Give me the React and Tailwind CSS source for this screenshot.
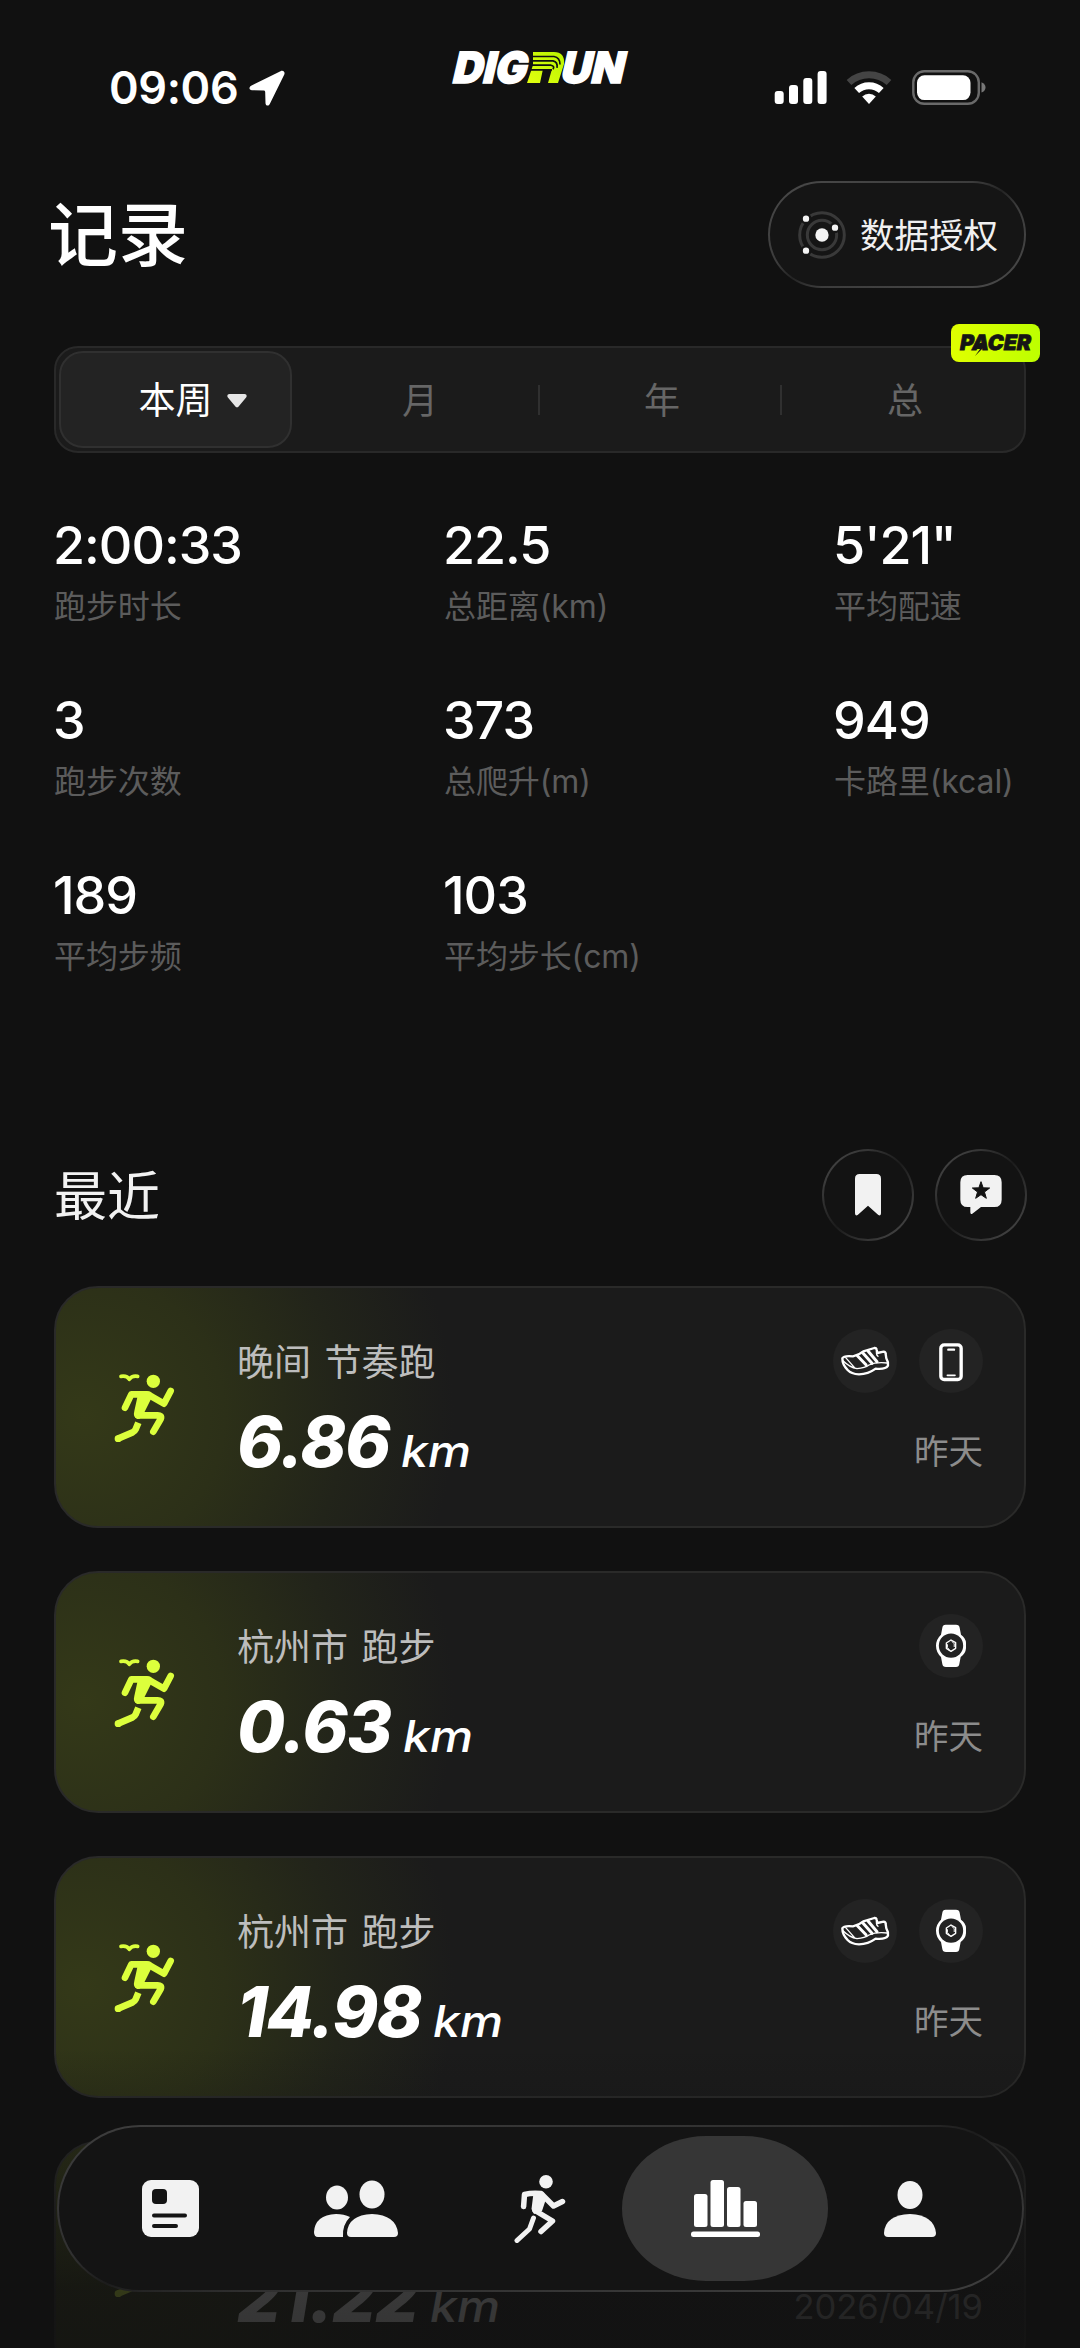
import React from "react";

const stats = [
  ["2:00:33", "跑步时长"],
  ["22.5", "总距离(km)"],
  ["5'21\"", "平均配速"],
  ["3", "跑步次数"],
  ["373", "总爬升(m)"],
  ["949", "卡路里(kcal)"],
  ["189", "平均步频"],
  ["103", "平均步长(cm)"],
];

const runs = [
  { title: "晚间 节奏跑", km: "6.86", date: "昨天", gear: ["shoe", "phone"] },
  { title: "杭州市 跑步", km: "0.63", date: "昨天", gear: ["watch"] },
  { title: "杭州市 跑步", km: "14.98", date: "昨天", gear: ["shoe", "watch"] },
  { title: "", km: "21.22", date: "2026/04/19", gear: [] },
];

function StatusBar() {
  return (
    <div className="flex h-[136px] shrink-0 items-start pl-[109px] pr-[94px]">
      <div className="mt-[61px] flex w-[331px] items-center gap-[11px]">
        <span className="text-[45px] leading-[54px] font-semibold tracking-[-0.4px]">09:06</span>
        <svg width="36" height="36" viewBox="0 0 36 36" fill="#fff">
          <path d="M31.5 1.2 2.6 15.5C-.4 17-.2 20 3 20.2l11.600.4c1 0 1.600.6 1.600 1.600l.3 11c.2 3 3.300 3.200 4.400.5L35.300 4.500c1-2.500-1-4.500-3.800-3.300Z" />
        </svg>
      </div>
      <svg className="mt-[37px] overflow-visible" width="202" height="62" viewBox="-12 -12 202 62">
        <defs>
          <linearGradient id="lime" x1="0" x2="1" y1="1" y2="0">
            <stop offset="0" stopColor="#e2ff10" />
            <stop offset="1" stopColor="#b8f500" />
          </linearGradient>
        </defs>
        <g fill="#fff" fontFamily="Inter" fontWeight="900" fontSize="43" transform="translate(0 34) skewX(-13)">
          <text x="-1" y="0" textLength="74" lengthAdjust="spacingAndGlyphs" stroke="#fff" strokeWidth="1.500">DIG</text>
          <text x="107" y="0" textLength="63" lengthAdjust="spacingAndGlyphs" stroke="#fff" strokeWidth="1.500">UN</text>
        </g>
        <path d="M81 3h21q11 0 10 12l-6 19h-10l4-14h-9l-3 14H75l6-18Z" fill="url(#lime)" />
        <g fill="none" stroke="#111" strokeWidth="1.700">
          <path d="M80 7.500h22q6 1 6 8M79 11.800h22q5 1 4 7M78 16.200h21q4 1 2 4M76 20.800h24" />
        </g>
      </svg>
      <div className="mt-[69px] ml-auto flex items-start">
        <svg width="215" height="37" viewBox="0 0 215 37">
          <g fill="#fff">
            <rect x="3.700" y="22" width="9" height="13" rx="3" />
            <rect x="18" y="16" width="9" height="19" rx="3" />
            <rect x="32.300" y="9" width="9" height="26" rx="3" />
            <rect x="46.600" y="2" width="9" height="33" rx="3" />
          </g>
          <g fill="none" strokeWidth="7">
            <path d="M78 13.500a30 30 0 0 1 40 0" stroke="#444" />
            <path d="M85.700 21.500a18.500 18.500 0 0 1 24.600 0" stroke="#fff" />
          </g>
          <path d="M98 35l-6.800-7.500a10 10 0 0 1 13.600 0Z" fill="#fff" />
          <rect x="142.300" y="2.300" width="65.500" height="32.500" rx="11" fill="none" stroke="#6a6a6a" strokeWidth="2.400" />
          <rect x="146" y="6.300" width="53.500" height="24.800" rx="7.500" fill="#fff" />
          <path d="M210.500 13.200q4 1.800 4 5.200t-4 5.200Z" fill="#777" />
        </svg>
      </div>
    </div>
  );
}

function Header() {
  return (
    <header className="mt-[45px] flex h-[107px] items-center justify-between">
      <h1 className="mt-[2px] -ml-[6px] text-[70px] leading-[84px] font-medium">记录</h1>
      <div className="h-[107px] w-[258px] rounded-[54px] bg-[linear-gradient(to_bottom_right,#4a4a4a,#3c3c3c_40%,#242424_50%,#3c3c3c_60%,#4a4a4a)] p-[2px]">
        <div className="flex h-full items-center rounded-[52px] bg-[#151515] pl-[27px]">
          <svg width="50" height="50" viewBox="0 0 150 150">
            <g fill="none" stroke="#393939" strokeWidth="9">
              <circle cx="75" cy="75" r="67" />
              <circle cx="75" cy="75" r="44" />
            </g>
            <g fill="#f3f3f3" stroke="#151515" strokeWidth="7">
              <circle cx="27" cy="26" r="13" />
              <circle cx="27" cy="122" r="13" />
              <circle cx="114" cy="53" r="13" />
            </g>
            <circle cx="75" cy="75" r="20" fill="#f3f3f3" />
          </svg>
          <span className="mt-[2px] ml-[13px] text-[34.500px] leading-[50px] font-normal text-[#f0f0f0]">数据授权</span>
        </div>
      </div>
    </header>
  );
}

function Tabs() {
  return (
    <div className="relative mt-[58px] grid h-[107px] grid-cols-4 rounded-[24px] border-2 border-[#292929] bg-[#1b1b1b] text-[36px] font-normal text-[#666]">
      <div className="my-[3px] mr-[6px] ml-[3px] flex items-center justify-center rounded-[24px] border-2 border-[#303030] bg-[#232323] text-white">
        <span className="relative mt-[3px] text-[37px]">
          本周
          <svg className="absolute top-[21px] left-[88px]" width="20" height="14" viewBox="0 0 20 14">
            <path d="M2.500 0h15c2 0 2.800 2 1.600 3.400l-7.500 9c-1 1.200-2.200 1.200-3.200 0L.9 3.400C-.3 2 .5 0 2.500 0Z" fill="#e6e6e6" />
          </svg>
        </span>
      </div>
      {["月", "年", "总"].map((t, i) => (
        <div key={t} className="flex items-center">
          <span className="mt-[2px] flex-1 pl-[4px] text-center">{t}</span>
          {i < 2 && <i className="h-[30px] w-[2px] bg-[#303030]" />}
        </div>
      ))}
      <div className="absolute -top-[24px] -right-[16px] flex h-[38px] w-[89px] items-center justify-center rounded-[8px] bg-linear-to-r from-[#e0ff00] to-[#bdff00]">
        <svg className="overflow-visible" width="86" height="38" viewBox="-5 -6 86 38">
          <text transform="translate(0 20) skewX(-10)" x="1" y="0" textLength="71" lengthAdjust="spacingAndGlyphs" fontFamily="Inter" fontWeight="900" fontSize="21" fill="#151515" stroke="#151515" strokeWidth=".8">PACER</text>
          <path d="M22 13l-4 6h4l-5 7 9-9h-4l3-4Z" fill="#151515" />
        </svg>
      </div>
    </div>
  );
}

function Stats() {
  return (
    <div className="mt-[60px] grid h-[525px] w-[1170px] grid-cols-[390px_390px_390px] grid-rows-[175px_175px_175px]">
      {stats.map(([v, l]) => (
        <div key={l}>
          <div className="-ml-[1px] h-[66px] text-[52px] leading-[66px] font-[450] tracking-[-1px]">{v}</div>
          <div className="mt-[4px] text-[32px] leading-[48px] font-normal tracking-[-0.1px] text-[#5c5c5c]">{l}</div>
        </div>
      ))}
    </div>
  );
}

function RoundButton({ children }) {
  return (
    <div className="size-[92px] rounded-full bg-[linear-gradient(135deg,#444_10%,#1c1c1c_50%,#444_90%)] p-[2px]">
      <div className="flex size-full items-center justify-center rounded-full bg-[#131313]">{children}</div>
    </div>
  );
}

function RecentHeader() {
  return (
    <div className="mt-[111px] flex h-[92px] items-center justify-between">
      <h2 className="mt-[4px] text-[53px] leading-[72px] font-normal text-[#f2f2f2]">最近</h2>
      <div className="-mr-[1px] flex gap-[21px]">
        <RoundButton>
          <svg width="26" height="42" viewBox="0 0 78 126" fill="#f2f2f2">
            <path d="M14 0h50q14 0 14 14v104q0 9-8 5L39 95 8 123q-8 4-8-5V14Q0 0 14 0Z" />
          </svg>
        </RoundButton>
        <RoundButton>
          <svg width="42" height="40" viewBox="0 0 124 120">
            <path d="M22 0h80q22 0 22 22v52q0 22-22 22H62l-26 20q-6 3-6-4V96h-8Q0 96 0 74V22Q0 0 22 0Z" fill="#f2f2f2" />
            <path d="m62 20 6.500 18.500 19.500.5-15.600 12L78 70 62 59 46 70l5.600-19L36 39l19.500-.5Z" fill="#131313" stroke="#131313" strokeWidth="3" strokeLinejoin="round" />
          </svg>
        </RoundButton>
      </div>
    </div>
  );
}

function Gear({ kind }) {
  return (
    <svg width="64" height="64" viewBox="0 0 192 192" fill="none" stroke="#fff" strokeLinecap="round" strokeLinejoin="round">
      <circle cx="96" cy="96" r="96" fill="#232323" stroke="none" />
      {kind === "shoe" && (
        <>
          <path strokeWidth="7" d="M28 88Q32 79 60 82Q78 78 91 67L124 57Q130 56 131 62L133 72L152 68Q158 68 158 75L160 88Q167 100 165 110Q158 122 128 119Q105 136 78 136Q55 135 43 122Q28 107 28 88Z" />
          <path strokeWidth="4" d="M30 95Q50 115 72 119Q96 117 108 108Q130 98 163 102M38 86L64 115M131 64Q128 76 135 82" />
          <path strokeWidth="9" d="M73 80L99 107M89 71L117 103M105 66L132 98" />
        </>
      )}
      {kind === "phone" && (
        <>
          <rect x="65.500" y="47.500" width="61" height="104" rx="10" strokeWidth="10" />
          <path d="M88 62h17" strokeWidth="7" />
          <path d="M85 139h23" strokeWidth="5" />
        </>
      )}
      {kind === "watch" && (
        <>
          <path fill="#fff" stroke="none" d="M80 32h31q10 0 11 9l4 21q14 10 15 24v17q-1 16-16 26l-4 21q-1 9-10 9H81q-10 0-11-9l-4-21Q51 114 51 95t15-33l4-21q1-9 10-9Z" />
          <circle cx="96" cy="95" r="36.500" fill="#232323" stroke="none" />
          <path strokeWidth="4" d="M96 78l14 8v17l-14 9-14-9V87ZM96 78l8 5M82 103l8 6" />
          <path strokeWidth="3" d="M100 83q9 5 6 15M90 107q-8-6-5-15" />
        </>
      )}
    </svg>
  );
}

function TrailRunner() {
  return (
    <svg width="90" height="100" viewBox="0 0 270 300" fill="none" stroke="#dcff3c" strokeLinecap="round" strokeLinejoin="round" strokeWidth="20">
      <circle cx="160" cy="64" r="20" fill="#dcff3c" stroke="none" />
      <path strokeWidth="11" d="M63 49q18-3 25 9 8-12 25-9" />
      <path d="M75 143 94 103h46q8 0 14 6l38 22 20-38" />
      <path fill="#dcff3c" stroke="none" d="M116 94h28q14 2 12 17l-22 44q-8 22-22 22-14-6-9-24Z" />
      <path d="M114 166h57q16-1 11 11l-22 38" />
      <path d="M54 236 98 217q6-3 9-9l8-20" strokeLinecap="butt" />
      <path d="M54 236h1" />
    </svg>
  );
}

function RunCard({ title, km, date, gear }) {
  return (
    <div className="flex h-[242px] shrink-0 rounded-[44px] border-2 border-[#2a2a29] bg-[#1b1b1b] bg-[radial-gradient(circle_370px_at_30px_130px,#343918,#2c3018_38%,#22241a_70%,#1b1b1b)] bg-origin-border pr-[41px]">
      <div className="mt-[72px] ml-[44px] w-[137px] shrink-0">
        <TrailRunner />
      </div>
      <div className="mt-[50px] flex-1">
        <div className="h-[50px] text-[37px] leading-[50px] font-normal text-[#bdbdbd] [word-spacing:3px]">{title}</div>
        <div className="mt-[10px] flex h-[88px] items-baseline gap-[12px] italic leading-[88px]">
          <span className="text-[69.500px] font-extrabold tracking-[-1.500px]">{km}</span>
          <span className="inline-block origin-left scale-x-[1.1] text-[44px] font-medium">km</span>
        </div>
      </div>
      <div className="mt-[41px] flex flex-col items-end">
        <div className="flex h-[64px] gap-[22px]">
          {gear.map((g) => (
            <Gear key={g} kind={g} />
          ))}
        </div>
        <div className="mt-[34px] text-[34.500px] leading-[50px] font-normal text-[#8c8c8c]">{date}</div>
      </div>
    </div>
  );
}

function TabBar() {
  return (
    <nav className="absolute top-[2125px] left-[57px] h-[167px] w-[967px] rounded-[84px] bg-[linear-gradient(to_bottom_right,#3e3e3e,#303030_40%,#1c1c1c_50%,#303030_60%,#3e3e3e)] p-[2px]">
      <div className="grid h-full grid-cols-5 items-center justify-items-center rounded-[82px] bg-[#141414] pr-[20px] pl-[20px] text-[#f2f2f2]">
        <svg className="-ml-[1px]" width="57" height="57" viewBox="0 0 57 57">
          <rect width="57" height="57" rx="9" fill="currentColor" />
          <rect x="10" y="9" width="15" height="15" rx="4" fill="#141414" />
          <path d="M12 35.500h31M12 46h22" stroke="#141414" strokeWidth="4" strokeLinecap="round" />
        </svg>
        <svg width="84" height="57" viewBox="0 0 84 57" fill="currentColor">
          <ellipse cx="23" cy="17.500" rx="11" ry="12" />
          <ellipse cx="58" cy="14.500" rx="12.500" ry="14" />
          <path d="M4 57q-4 0-4-5 1-17 22-18 8 0 14 3-8 8-7 20ZM37 57q-4 0-4-4 1-18 25-19 24 1 26 19 0 4-4 4Z" />
        </svg>
        <svg width="52" height="68" viewBox="0 0 52 68" fill="none" stroke="currentColor" strokeWidth="5.500" strokeLinecap="round" strokeLinejoin="round">
          <circle cx="32" cy="6.800" r="6.800" fill="currentColor" stroke="none" />
          <path d="M9.600 31.500 10.500 19.500Q18 17.500 27 18.500L39.500 31 48.500 26.500" />
          <path d="M19.500 18 30 17.500 32 24 28 36 20 39 17.500 34Z" fill="currentColor" stroke="none" />
          <path d="M21 35.500 38.500 46 27 56.500" />
          <path d="M19.500 43 15.500 54 3 65.500" strokeWidth="5" />
        </svg>
        <div className="-mx-[12px] flex h-[145px] w-[206px] items-center justify-center rounded-[84px/72px] bg-[#363636] text-white">
          <svg width="69" height="57" viewBox="0 0 69 57" fill="currentColor">
            <rect x="3" y="14" width="13.500" height="33" rx="2.500" />
            <rect x="19.500" y="0" width="13.500" height="47" rx="2.500" />
            <rect x="36" y="7" width="13.500" height="40" rx="2.500" />
            <rect x="52.500" y="21" width="13.500" height="26" rx="2.500" />
            <rect y="51.500" width="69" height="5.500" rx="2.500" />
          </svg>
        </div>
        <svg width="52" height="56" viewBox="0 0 52 56" fill="currentColor">
          <ellipse cx="26" cy="14" rx="12.500" ry="14" />
          <path d="M4 56q-4 0-4-4 1-18 26-19 24 1 26 19 0 4-4 4Z" />
        </svg>
      </div>
    </nav>
  );
}

export default function App() {
  return (
    <div className="relative h-[2348px] w-[1080px] overflow-hidden bg-[#111] font-['Inter','Noto_Sans_CJK_SC',sans-serif] text-white">
      <StatusBar />
      <main className="px-[54px]">
        <Header />
        <Tabs />
        <Stats />
        <RecentHeader />
        <div className="mt-[45px] flex flex-col gap-[43px]">
          {runs.map((r) => (
            <RunCard key={r.km} {...r} />
          ))}
        </div>
      </main>
      <div className="absolute inset-x-0 bottom-0 h-[300px] bg-[linear-gradient(to_bottom,transparent,rgba(17,17,17,.35)_35%,rgba(17,17,17,.83)_80%,rgba(17,17,17,.86))]" />
      <TabBar />
    </div>
  );
}
